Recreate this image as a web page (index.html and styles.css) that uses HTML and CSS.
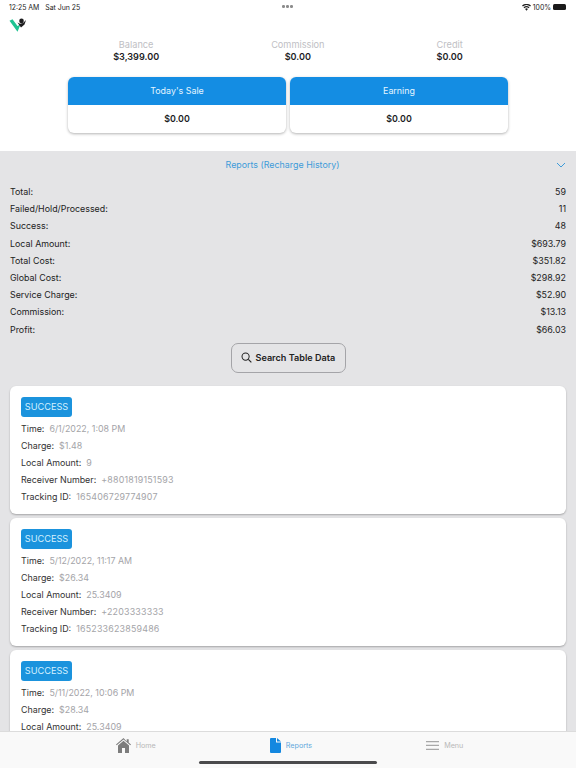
FILE: index.html
```html
<!DOCTYPE html>
<html lang="en">
<head>
<meta charset="utf-8">
<title>Reports</title>
<link rel="stylesheet" href="styles.css">
</head>
<body>
<div class="page">
  <header class="top">
    <div class="status">
      <div class="status-left"><span>12:25 AM</span><span>Sat Jun 25</span></div>
      <div class="dots"><i></i><i></i><i></i></div>
      <div class="status-right">
        <svg class="wifi" viewBox="0 0 14 10" width="9" height="7"><path d="M7 10 4.800 7.400a3.200 3.200 0 0 1 4.400 0zM3.600 6.100 2.400 4.700a7 7 0 0 1 9.200 0l-1.200 1.400a5 5 0 0 0-6.800 0zM1.400 3.500 0 2a10.400 10.400 0 0 1 14 0l-1.400 1.500a8.500 8.500 0 0 0-11.200 0z" fill="#222"/></svg>
        <span>100%</span>
        <span class="battery"></span>
      </div>
    </div>
    <div class="logo-row">
      <svg class="logo" viewBox="0 0 17 14" width="17" height="14">
        <path d="M.5 2.700 3.500 1.300 8.500 8 11.500 6.500 8.500 13.800z" fill="#1fc392"/>
        <circle cx="12.500" cy="2.900" r="2.300" fill="#1d1d1f"/>
        <path d="M8.500 4.600 11 5.700 14 5 17 2 15.500 6.500 12 9.500z" fill="#1d1d1f"/>
      </svg>
    </div>
    <div class="totals">
      <div class="total"><span class="total-label">Balance</span><b>$3,399.00</b></div>
      <div class="total"><span class="total-label">Commission</span><b>$0.00</b></div>
      <div class="total"><span class="total-label">Credit</span><b>$0.00</b></div>
    </div>
    <div class="stat-cards">
      <div class="stat"><div class="stat-head">Today's Sale</div><div class="stat-body">$0.00</div></div>
      <div class="stat"><div class="stat-head">Earning</div><div class="stat-body">$0.00</div></div>
    </div>
  </header>

  <main class="report">
    <div class="report-head">
      <span>Reports (Recharge History)</span>
      <svg class="chevron" viewBox="0 0 10 6" width="10" height="6"><path d="M1 1l4 4 4-4" fill="none" stroke="#3d9bd9" stroke-width="1"/></svg>
    </div>
    <dl class="summary">
      <div><dt>Total:</dt><dd>59</dd></div>
      <div><dt>Failed/Hold/Processed:</dt><dd>11</dd></div>
      <div><dt>Success:</dt><dd>48</dd></div>
      <div><dt>Local Amount:</dt><dd>$693.79</dd></div>
      <div><dt>Total Cost:</dt><dd>$351.82</dd></div>
      <div><dt>Global Cost:</dt><dd>$298.92</dd></div>
      <div><dt>Service Charge:</dt><dd>$52.90</dd></div>
      <div><dt>Commission:</dt><dd>$13.13</dd></div>
      <div><dt>Profit:</dt><dd>$66.03</dd></div>
    </dl>
    <button class="search" type="button">
      <svg viewBox="0 0 12 12" width="11" height="11"><circle cx="5" cy="5" r="3.900" fill="none" stroke="#222" stroke-width="1.100"/><path d="M8 8l3.300 3.300" stroke="#222" stroke-width="1.200"/></svg>
      <span>Search Table Data</span>
    </button>
    <div class="list">
      <article class="card">
        <span class="badge">SUCCESS</span>
        <p><b>Time:</b><span>6/1/2022, 1:08 PM</span></p>
        <p><b>Charge:</b><span>$1.48</span></p>
        <p><b>Local Amount:</b><span>9</span></p>
        <p><b>Receiver Number:</b><span class="num">+8801819151593</span></p>
        <p><b>Tracking ID:</b><span class="num">165406729774907</span></p>
      </article>
      <article class="card">
        <span class="badge">SUCCESS</span>
        <p><b>Time:</b><span>5/12/2022, 11:17 AM</span></p>
        <p><b>Charge:</b><span>$26.34</span></p>
        <p><b>Local Amount:</b><span>25.3409</span></p>
        <p><b>Receiver Number:</b><span class="num">+2203333333</span></p>
        <p><b>Tracking ID:</b><span class="num">165233623859486</span></p>
      </article>
      <article class="card">
        <span class="badge">SUCCESS</span>
        <p><b>Time:</b><span>5/11/2022, 10:06 PM</span></p>
        <p><b>Charge:</b><span>$28.34</span></p>
        <p><b>Local Amount:</b><span>25.3409</span></p>
      </article>
    </div>
  </main>

  <nav class="tabs">
    <div class="tab">
      <svg viewBox="0 0 15 15" width="15" height="15"><path d="M7.500 0 0 6.500l.7.800L7.500 1.500l6.800 5.800.7-.8-2.300-2V1.200h-2v2.300z" fill="#7d7d7d"/><path d="M2 7.500 7.500 2.800 13 7.500V15H9V10H6v5H2z" fill="#7d7d7d"/></svg>
      <span>Home</span>
    </div>
    <div class="tab active">
      <svg viewBox="0 0 11 15" width="11" height="15"><path d="M1 0h5v4.500h5V14a1 1 0 0 1-1 1H1a1 1 0 0 1-1-1V1a1 1 0 0 1 1-1zM7 0l4 3.500H7z" fill="#1488e0"/></svg>
      <span>Reports</span>
    </div>
    <div class="tab">
      <svg viewBox="0 0 13 9" width="13" height="9"><path d="M0 0h13v1.300H0zM0 3.800h13v1.300H0zM0 7.700h13V9H0z" fill="#a8a8a8"/></svg>
      <span>Menu</span>
    </div>
    <div class="home-bar"></div>
  </nav>
</div>
</body>
</html>
```
FILE: styles.css
```css
* { box-sizing: border-box; }
html, body { margin: 0; padding: 0; }
body { font-family: Inter, "Liberation Sans", sans-serif; color: #1d1d1f; background: #fff; }
.page { width: 576px; height: 768px; display: flex; flex-direction: column; overflow: hidden; }

.top { flex: none; height: 151px; background: #fff; }
.status { height: 14px; padding: 0 9px; display: flex; justify-content: space-between; align-items: center; position: relative; font-size: 6.900px; color: #222; }
.status-left { display: flex; gap: 6px; }
.dots { position: absolute; left: 282px; top: 5px; display: flex; gap: 1.500px; }
.dots i { width: 2.500px; height: 2.500px; border-radius: 50%; background: #8c8c8c; }
.status-right { display: flex; align-items: center; gap: 2px; }
.battery { width: 13px; height: 6px; border-radius: 1.500px; background: #1a1a1a; margin-right: 1px; }
.logo-row { height: 20px; padding: 4px 0 0 9px; }
.logo { display: block; }

.totals { display: flex; justify-content: center; gap: 112px; height: 43px; padding-top: 4.500px; }
.total { display: flex; flex-direction: column; align-items: center; line-height: 12px; }
.total-label { font-size: 9.200px; color: #c0c0c4; }
.total b { font-size: 9.100px; font-weight: 600; color: #1d1d1f; }

.stat-cards { display: flex; justify-content: center; gap: 4px; }
.stat { width: 218px; height: 56px; border-radius: 6px; overflow: hidden; box-shadow: 0 1px 3px rgba(0,0,0,.3); background: #fff; }
.stat-head { height: 28px; padding-bottom: 1px; background: #148de3; color: #e4f5ff; font-size: 8.900px; display: flex; align-items: center; justify-content: center; }
.stat-body { height: 28px; padding-bottom: 2px; font-size: 8.900px; font-weight: 600; display: flex; align-items: center; justify-content: center; }

.report { flex: 1; min-height: 0; overflow: hidden; background: #e4e4e6; }
.report-head { height: 27px; position: relative; display: flex; align-items: center; justify-content: center; padding-right: 11px; font-size: 8.900px; color: #3d9bd9; }
.chevron { position: absolute; right: 10px; top: 11px; }
.summary { margin: 5px 0 0; padding: 0 10px; font-size: 8.900px; color: #222; }
.summary div { display: flex; justify-content: space-between; height: 17.200px; line-height: 17.200px; }
.summary dt, .summary dd { margin: 0; }

.search { display: flex; align-items: center; gap: 4px; width: 115px; height: 30px; margin: 5px auto 0; padding: 0 0 0 9px; background: transparent; border: 1px solid #a4a4a8; border-radius: 7px; font: 600 9.100px Inter, "Liberation Sans", sans-serif; color: #222; white-space: nowrap; }

.list { margin-top: 13px; padding: 0 10px; display: flex; flex-direction: column; gap: 4px; }
.card { flex: none; height: 128px; padding: 11px 11px 0; background: #fff; border-radius: 6px; box-shadow: 0 1px 2px rgba(0,0,0,.28); }
.badge { display: block; width: 51px; height: 20px; border-radius: 3px; background: #1b93dd; color: #d4f0ff; font-size: 9.200px; line-height: 20px; text-align: center; margin-bottom: 3px; }
.card p { margin: 0; height: 17.200px; line-height: 17.200px; font-size: 8.900px; display: flex; gap: 5px; }
.card b { font-weight: 400; color: #333; }
.card span:not(.badge) { color: #a4a4a8; }
.card .num { letter-spacing: .2px; }

.tabs { flex: none; height: 37px; position: relative; display: flex; justify-content: center; gap: 114px; background: #f9f9f9; border-top: 1px solid #dcdcdc; padding: 0 0 10px 3px; }
.tab { display: flex; align-items: center; gap: 5px; font-size: 7.200px; color: #b8b8b8; }
.tab.active { color: #63a8dc; }
.home-bar { position: absolute; left: 199px; bottom: 4px; width: 178px; height: 3px; border-radius: 2px; background: #4a4a4c; }
```
